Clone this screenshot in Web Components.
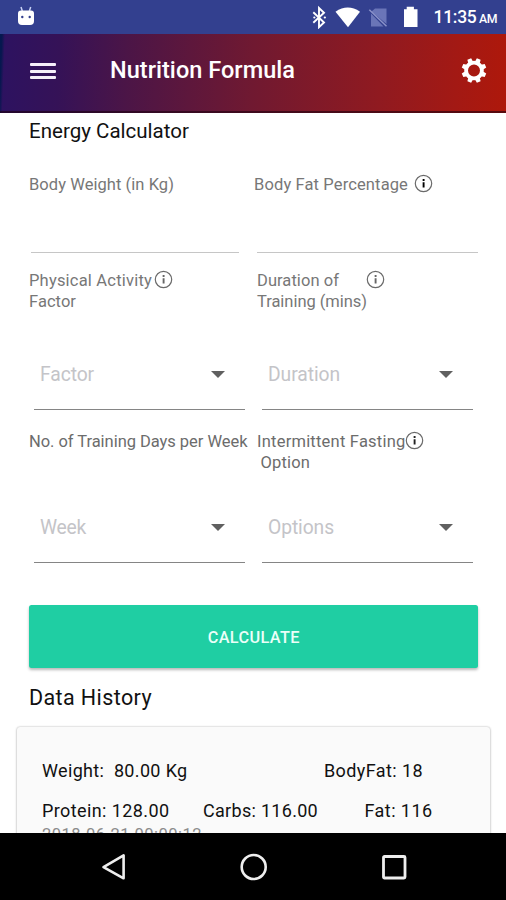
<!DOCTYPE html>
<html lang="en">
<head>
<meta charset="utf-8">
<title>Nutrition Formula</title>
<style>
  html, body { margin: 0; height: 100%; }
  body { font-family: Roboto, "Liberation Sans", sans-serif; background: #fff; overflow: hidden; }
</style>
</head>
<body>
<nutrition-app></nutrition-app>
<script>
const define = (name, html, setup) => {
  const tpl = document.createElement('template');
  tpl.innerHTML = html.trim();
  customElements.define(name, class extends HTMLElement {
    connectedCallback() {
      if (this.shadowRoot) return;
      this.attachShadow({ mode: 'open' }).appendChild(tpl.content.cloneNode(true));
      if (setup) setup(this, this.shadowRoot);
    }
  });
};

/* One line of text, tracked so that its advance plus a 1px lead equals the "w" attribute. */
define('fit-text', `<style>:host{display:block;flex:none}span{display:inline-block;white-space:pre;vertical-align:top;margin-left:1px}</style><span><slot></slot></span>`, (el, root) => {
  const span = root.querySelector('span');
  const w = parseFloat(el.getAttribute('w')) - 1;
  if (!w) return;
  const natural = span.getBoundingClientRect().width;
  span.style.letterSpacing = ((w - natural) / el.textContent.length).toFixed(3) + 'px';
});

define('info-icon', `
  <style>:host{display:block;width:19px;height:19px;flex:none}svg{display:block}</style>
  <svg width="19" height="19" viewBox="0 0 19 19">
    <circle cx="9.5" cy="9.5" r="8.2" fill="none" stroke="#6a6a6a" stroke-width="1.2"/>
    <path d="M9.6 5v2M9.6 8.200v5.300" fill="none" stroke="var(--dot,#666)" stroke-width="1.900"/>
  </svg>`);

define('status-bar', `
  <style>
    :host{display:flex;align-items:center;height:34px;background:#33408f;color:#fff;padding:0 9px 0 17px}
    svg{display:block;flex:none}
    .gap{flex:1}
    .clock{display:flex;align-items:baseline;margin-left:8px;font-weight:500;line-height:32px;padding-top:2px}
    .t{font-size:17.5px}.am{font-size:12.300px;margin-left:1.500px}
  </style>
  <svg width="18" height="22" viewBox="0 0 18 22">
    <path d="M4 1l1.3 4M13.700 1l-1.300 4" stroke="#c9d2f5" stroke-width="1.500"/>
    <path d="M1 7.500Q1 4.500 4 4.500h10q3 0 3 3V15q0 4-4 4H5q-4 0-4-4z" fill="#fff"/>
    <circle cx="5.300" cy="11" r="1.200" fill="#33408f"/><circle cx="12.700" cy="11" r="1.200" fill="#33408f"/>
  </svg>
  <span class="gap"></span>
  <svg width="115" height="24" viewBox="310 5 115 24">
    <path d="M313.300 12.300l10.700 10.200-5 4.700V8l5 4.700-10.700 10" fill="none" stroke="#fff" stroke-width="1.900"/>
    <path d="M314.300 17.500h.1M324.800 17.500h.1" stroke="#fff" stroke-width="2.200" stroke-linecap="round"/>
    <path d="M335.500 11.700Q347.800 3.500 360 11.700L348 27.200z" fill="#fff"/>
    <path d="M375 8.500h11.500v15.500L371.500 11.500zM371 13.500l12.500 13H371z" fill="#6a75b8"/>
    <path d="M369.300 9.700l17.200 16.500" stroke="#8b93ca" stroke-width="1.500"/>
    <path d="M404 9.200h2.700V6.800h7.200v2.400h3.600V27H404z" fill="#fff"/>
  </svg>
  <div class="clock"><fit-text class="t" w="44">11:35</fit-text><fit-text class="am" w="19">AM</fit-text></div>`);

define('app-bar', `
  <style>
    :host{display:flex;align-items:center;box-sizing:border-box;height:79px;padding:0 19px 5px 30px;color:#fff;
      background:linear-gradient(rgba(30,0,15,0) 76.500px,rgba(30,0,15,.6) 77.500px),
        linear-gradient(92deg,#03194f 0,#07174f 2px,#2d1260 5px,#351257 60px,#4b1547 25%,#701931 50%,#901a20 75%,#a31914 90%,#ae180b 100%)}
    .menu{display:grid;gap:3.500px;width:26px;margin-right:53px}
    .menu i{height:3px;background:#f6effa;border-radius:1px}
    .title{font-size:23.500px;font-weight:500;padding-bottom:2px}
    .gap{flex:1}
    svg{display:block}
  </style>
  <div class="menu"><i></i><i></i><i></i></div>
  <fit-text class="title" w="186">Nutrition Formula</fit-text>
  <span class="gap"></span>
  <svg width="26" height="26" viewBox="-13 -12.500 26 26">
    <circle r="7.900" fill="none" stroke="#fff" stroke-width="3.800"/>
    <g id="teeth" fill="#fff"></g>
  </svg>`, (el, root) => {
  const ns = 'http://www.w3.org/2000/svg';
  for (let a = 0; a < 8; a++) {
    const p = document.createElementNS(ns, 'path');
    p.setAttribute('d', 'M-2.600-8.500L-2-12.400H2L2.600-8.500z');
    p.setAttribute('transform', `rotate(${a * 45 + 22.5})`);
    root.getElementById('teeth').appendChild(p);
  }
});

/* Caption beside its icon: text lines in the default slot. */
define('field-caption', `
  <style>:host{display:flex;align-items:flex-start;font-size:16.500px;line-height:21px;color:#777}</style>
  <div><slot></slot></div><slot name="icon"></slot>`);

define('text-field', `
  <style>:host{display:block;height:59px;border-bottom:1.500px solid #c6c6c6}</style>`);

define('select-field', `
  <style>
    :host{display:flex;align-items:center;justify-content:space-between;box-sizing:border-box;width:211px;height:72px;
      margin:26px 0 0 6px;padding:1px 20.500px 0 5px;border-bottom:1.500px solid #858585;font-size:19.300px;color:#c4c4c8}
    i{border:7px solid transparent;border-top:7px solid #606060;border-bottom:0}
  </style><slot></slot><i></i>`);

define('action-button', `
  <style>:host{display:flex;align-items:center;justify-content:center;height:63px;border-radius:2.500px;background:#1fcea3;
    color:#eafff8;font-size:16.300px;font-weight:500;box-shadow:0 2px 3px rgba(0,0,0,.28);padding-top:2px;box-sizing:border-box}</style><slot></slot>`);

define('history-card', `
  <style>
    :host{display:block;box-sizing:border-box;height:150px;padding:32px 25px 0 24px;background:#fafafa;border-radius:3px;
      box-shadow:0 0 2px rgba(0,0,0,.3),0 1px 3px rgba(0,0,0,.16);font-size:18px;line-height:24px;color:#111}
    .row{display:flex;height:39.500px}
    .date{font-size:16.500px;color:#8b8b8b;margin-top:-15px}
  </style>
  <div class="row"><fit-text w="146.5">Weight:  80.00 Kg</fit-text><fit-text w="100" style="margin-left:135.500px">BodyFat: 18</fit-text></div>
  <div class="row"><fit-text w="128.5">Protein: 128.00</fit-text><fit-text w="116" style="margin-left:32.500px">Carbs: 116.00</fit-text><fit-text w="69" style="margin-left:45.500px">Fat: 116</fit-text></div>
  <fit-text class="date" w="161">2018-06-21 00:00:12</fit-text>`);

define('nav-bar', `
  <style>:host{display:flex;justify-content:space-between;align-items:center;box-sizing:border-box;height:67px;background:#000;padding:0 99px 0 101px}svg{display:block}</style>
  <svg width="26" height="30" viewBox="0 0 26 30"><path d="M22.600 3.300v23L2.500 15.100z" fill="none" stroke="#eee" stroke-width="2.600" stroke-linejoin="round"/></svg>
  <svg width="28" height="28" viewBox="0 0 28 28"><circle cx="13.700" cy="14" r="12" fill="none" stroke="#eee" stroke-width="2.600"/></svg>
  <svg width="26" height="26" viewBox="0 0 26 26"><rect x="2.500" y="2.500" width="21.500" height="21.500" rx="1" fill="none" stroke="#eee" stroke-width="2.800"/></svg>`);

define('nutrition-app', `
  <style>
    :host{display:flex;flex-direction:column;width:506px;height:900px}
    main{flex:1;min-height:0;overflow:hidden}
    .head{font-size:20.500px;line-height:36px;color:#111;padding-left:28px}
    .row{display:grid;grid-template-columns:228px 222px;align-items:start;padding-left:28px;box-sizing:border-box}
    .one{height:121px;padding-top:25px}
    .two{height:161px}
    .three{height:174px}
    nav-bar{flex:none}
    action-button{margin:0 28px 0 28.500px}
  </style>
  <status-bar></status-bar>
  <app-bar></app-bar>
  <main>
    <fit-text class="head" w="161">Energy Calculator</fit-text>
    <section class="row one">
      <div><field-caption><fit-text w="146">Body Weight (in Kg)</fit-text></field-caption>
        <text-field style="margin:-2px 17px 0 3px"></text-field></div>
      <div><field-caption style="margin-left:-3px"><fit-text w="155">Body Fat Percentage</fit-text><info-icon slot="icon" style="--dot:#000;margin-left:6px"></info-icon></field-caption>
        <text-field style="margin:-2px 0 0 1px"></text-field></div>
    </section>
    <section class="row two">
      <div><field-caption><fit-text w="124">Physical Activity</fit-text><fit-text w="48">Factor</fit-text><info-icon slot="icon" style="margin:-.5px 0 0 2px"></info-icon></field-caption>
        <select-field><fit-text w="55">Factor</fit-text></select-field></div>
      <div><field-caption><fit-text w="83">Duration of</fit-text><fit-text w="111">Training (mins)</fit-text><info-icon slot="icon" style="margin:-.5px 0 0 -1px"></info-icon></field-caption>
        <select-field><fit-text w="73">Duration</fit-text></select-field></div>
    </section>
    <section class="row three">
      <div><field-caption style="color:#6c6c6c;height:42px"><fit-text w="219.5">No. of Training Days per Week</fit-text></field-caption>
        <select-field style="margin-top:18px"><fit-text w="47">Week</fit-text></select-field></div>
      <div><field-caption style="color:#6c6c6c"><fit-text w="149.5">Intermittent Fasting</fit-text><fit-text w="50.5" style="margin-left:3.500px">Option</fit-text><info-icon slot="icon" style="margin-left:-.5px;--dot:#222"></info-icon></field-caption>
        <select-field style="margin-top:18px"><fit-text w="67">Options</fit-text></select-field></div>
    </section>
    <action-button><fit-text w="93">CALCULATE</fit-text></action-button>
    <fit-text class="head" style="font-size:21.500px;line-height:60px;height:59px" w="124">Data History</fit-text>
    <history-card style="margin:0 16px 0 17px"></history-card>
  </main>
  <nav-bar></nav-bar>`);
</script>
</body>
</html>
